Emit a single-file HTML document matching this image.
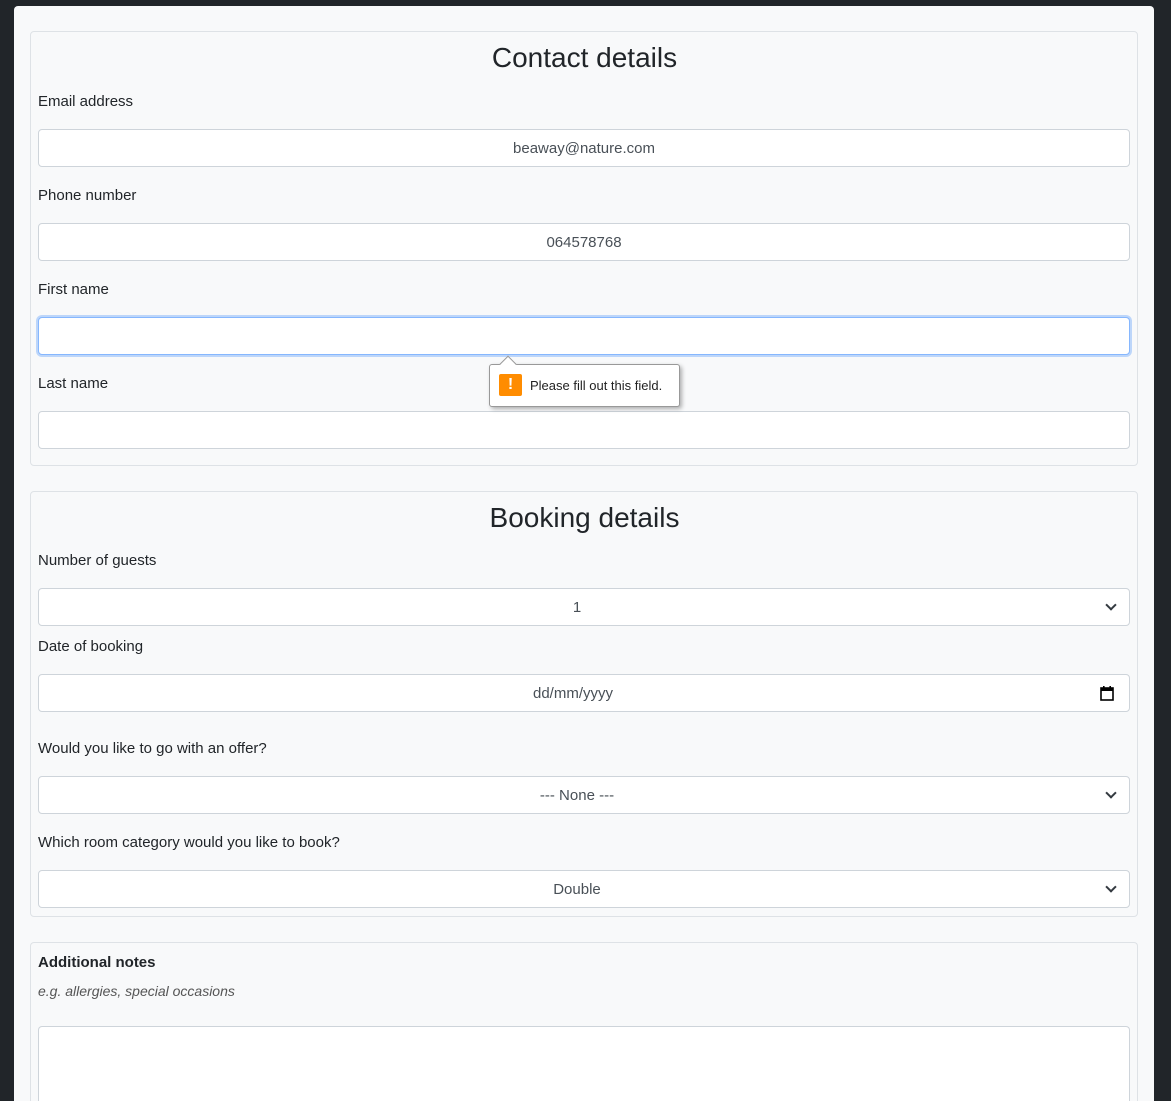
<!DOCTYPE html>
<html><head><meta charset="utf-8"><style>
*{box-sizing:border-box;margin:0;padding:0}
html,body{width:1171px;height:1101px;overflow:hidden;background:#212529;font-family:"Liberation Sans",sans-serif;color:#212529}
.card{position:absolute;left:14px;top:6px;width:1140px;height:1095px;background:#f8f9fa;border-radius:4px 4px 0 0}
.fs{position:absolute;left:30px;width:1108px;border:1px solid #dee2e6;border-radius:4px}
.h{position:absolute;left:0;width:1171px;text-align:center;font-size:28px;font-weight:500;line-height:34px;color:#212529}
.l{position:absolute;left:38px;font-size:15px;line-height:20px;color:#212529}
.in{position:absolute;left:38px;width:1092px;height:38px;background:#fff;border:1px solid #ced4da;border-radius:4px;text-align:center;font-size:15px;line-height:38px;color:#495057}
.sel::after{content:"";position:absolute;right:14px;top:12px;width:6px;height:6px;border-right:2px solid #343a40;border-bottom:2px solid #343a40;transform:rotate(45deg)}
</style></head><body>
<div class="card"></div>
<div class="fs" style="top:31px;height:435px"></div>
<div class="fs" style="top:491px;height:426px"></div>
<div class="fs" style="top:942px;height:159px;border-bottom:none;border-radius:4px 4px 0 0"></div>

<div class="h" style="top:41px;left:-1px">Contact details</div>
<div class="l" style="top:92px">Email address</div>
<div class="in" style="top:129px">beaway@nature.com</div>
<div class="l" style="top:186px">Phone number</div>
<div class="in" style="top:223px">064578768</div>
<div class="l" style="top:280px">First name</div>
<div class="in" style="top:317px;border-color:#86b7fe;box-shadow:0 0 0 2px rgba(13,110,253,.25)"></div>
<div class="l" style="top:374px">Last name</div>
<div class="in" style="top:411px"></div>

<div class="h" style="top:501px;left:-1px">Booking details</div>
<div class="l" style="top:551px">Number of guests</div>
<div class="in sel" style="top:588px;padding-right:14px">1</div>
<div class="l" style="top:637px">Date of booking</div>
<div class="in" style="top:674px;padding-right:22px">dd/mm/yyyy
<svg style="position:absolute;right:15px;top:11px" width="14" height="15" viewBox="0 0 14 15"><rect x="1" y="2" width="12" height="12" fill="none" stroke="#000" stroke-width="1.6"/><rect x="1" y="2" width="12" height="3" fill="#000"/><rect x="3" y="0" width="1.6" height="3" fill="#000"/><rect x="9.4" y="0" width="1.6" height="3" fill="#000"/></svg></div>
<div class="l" style="top:739px">Would you like to go with an offer?</div>
<div class="in sel" style="top:776px;padding-right:14px">--- None ---</div>
<div class="l" style="top:833px">Which room category would you like to book?</div>
<div class="in sel" style="top:870px;padding-right:14px">Double</div>

<div class="l" style="top:953px;font-weight:bold">Additional notes</div>
<div class="l" style="top:981px;font-style:italic;font-size:14px;color:#555">e.g. allergies, special occasions</div>
<div class="in" style="top:1026px;height:75px;border-bottom:none;border-radius:4px 4px 0 0"></div>

<div style="position:absolute;left:489px;top:364px;width:191px;height:43px;background:#fff;border:1px solid #999;border-radius:3px;box-shadow:2px 2px 4px rgba(0,0,0,.3)">
  <div style="position:absolute;left:12px;top:-7px;width:12px;height:12px;background:#fff;border-left:1px solid #999;border-top:1px solid #999;transform:rotate(45deg)"></div>
  <div style="position:absolute;left:9px;top:9px;width:23px;height:22px;background:#ff8c00;border-radius:2px;color:#fff;font-weight:bold;text-align:center;font-size:16px;line-height:22px">!</div>
  <div style="position:absolute;left:40px;top:13px;font-size:13px;line-height:16px;color:#222">Please fill out this field.</div>
</div>
</body></html>
